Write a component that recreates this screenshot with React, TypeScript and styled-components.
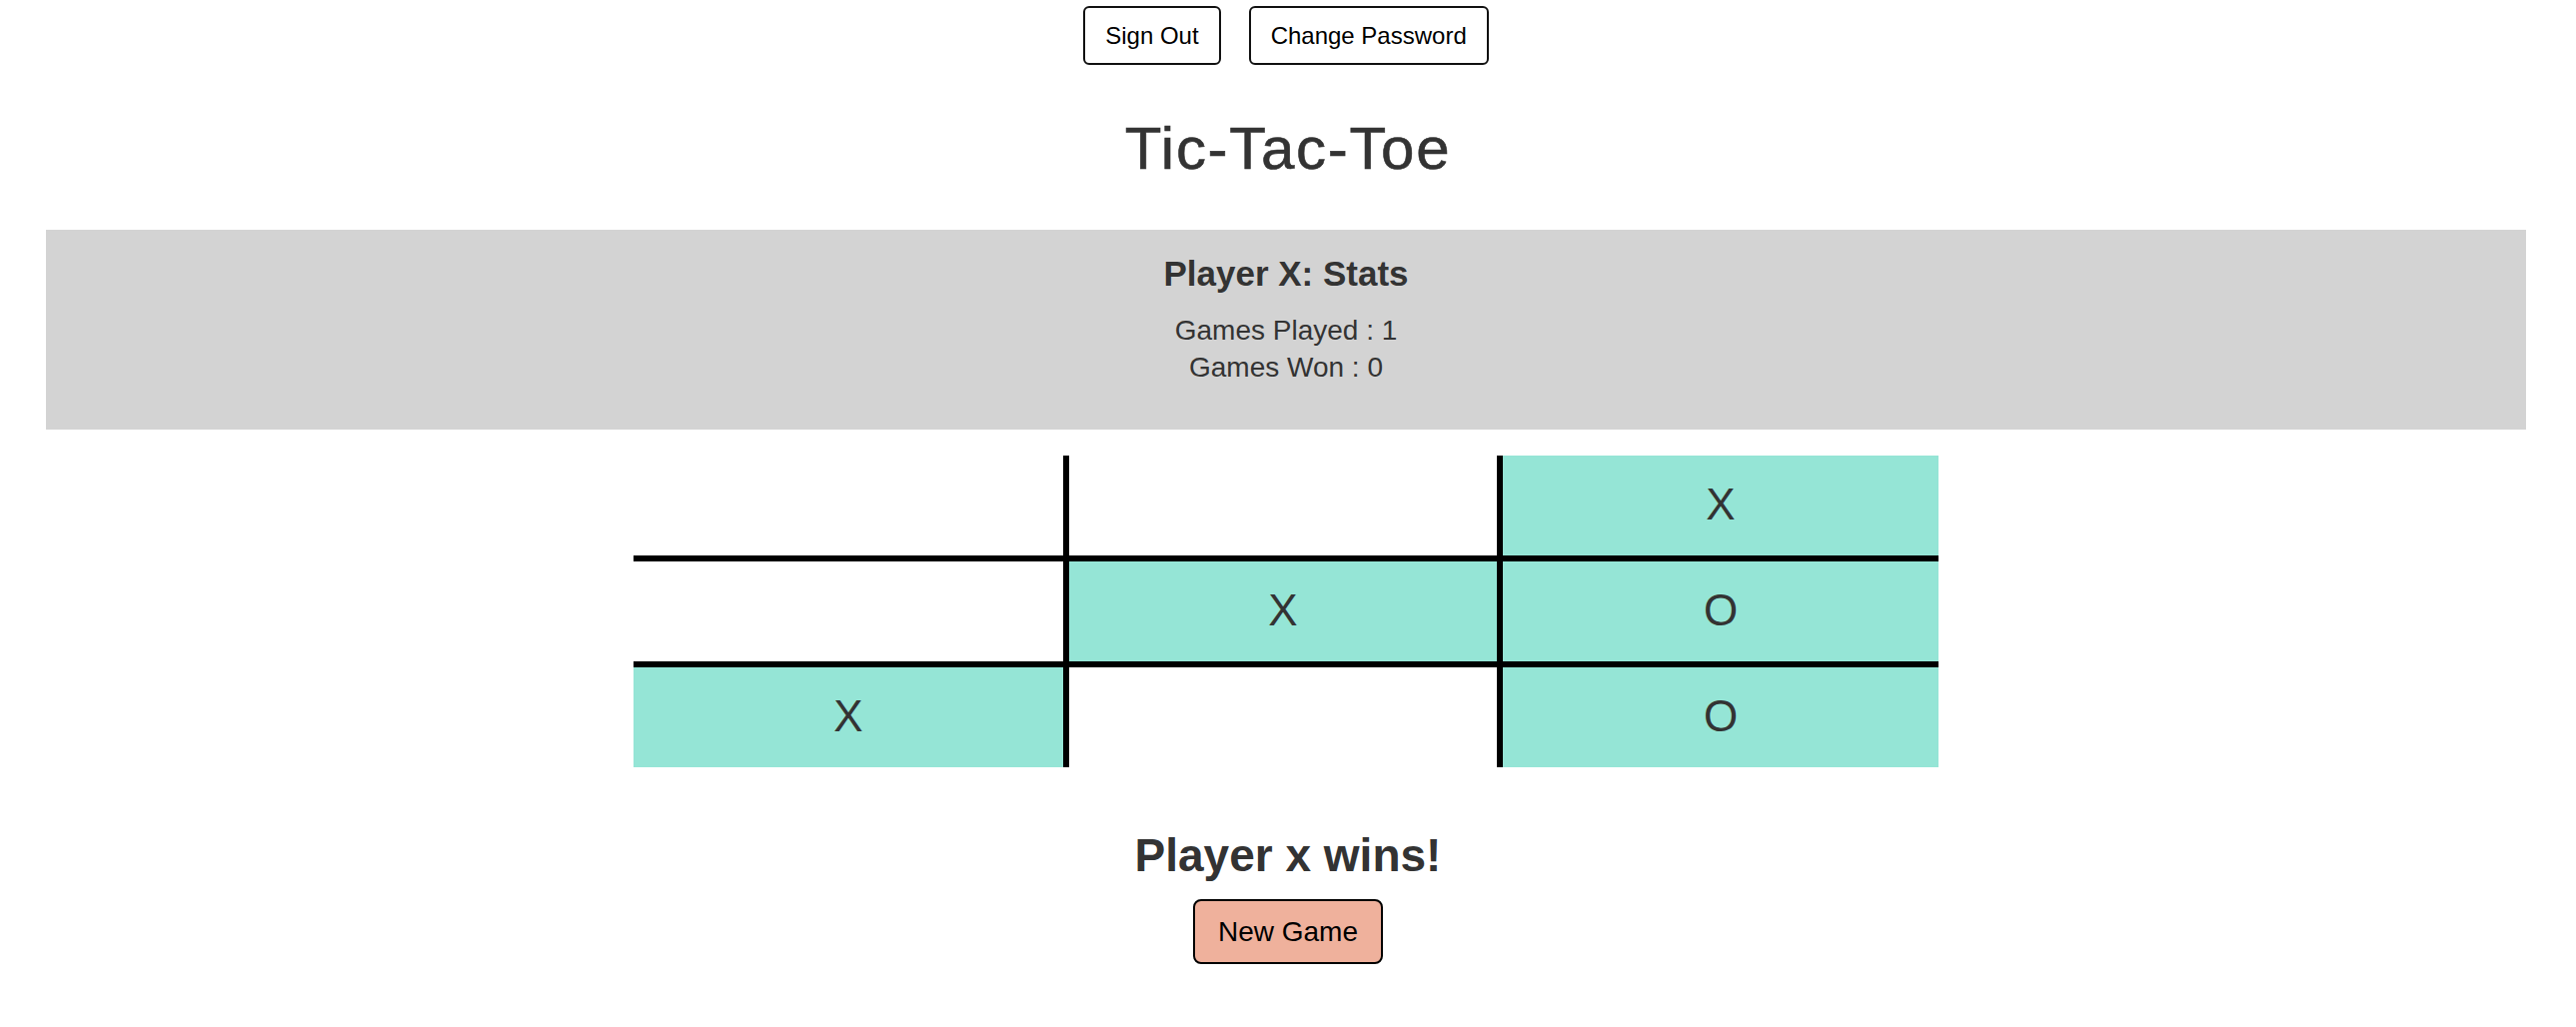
import styled, { createGlobalStyle } from "styled-components";

type Mark = "X" | "O" | "";

const board: Mark[] = ["", "", "X", "", "X", "O", "X", "", "O"];

const GlobalStyle = createGlobalStyle`
  body {
    margin: 0;
    background: #fff;
    font-family: "Liberation Sans", Arial, Helvetica, sans-serif;
    color: #333;
  }
`;

const App = () => {
  return (
    <Page>
      <GlobalStyle />
      <TopBar>
        <AuthButton>Sign Out</AuthButton>
        <AuthButton>Change Password</AuthButton>
      </TopBar>
      <Title>Tic-Tac-Toe</Title>
      <StatsPanel>
        <StatsTitle>Player X: Stats</StatsTitle>
        <StatsLines>
          <StatLine>Games Played : 1</StatLine>
          <StatLine>Games Won : 0</StatLine>
        </StatsLines>
      </StatsPanel>
      <BoardWrap>
        <Board>
          {board.map((mark, i) => (
            <Cell
              key={i}
              $filled={mark !== ""}
              $right={i % 3 !== 2}
              $bottom={i < 6}
            >
              {mark}
            </Cell>
          ))}
        </Board>
      </BoardWrap>
      <Result>Player x wins!</Result>
      <NewGameButton>New Game</NewGameButton>
    </Page>
  );
};
export default App;

const Page = styled.div`
  display: flex;
  flex-direction: column;
  align-items: center;
  width: 100%;
  padding-bottom: 60px;
`;

const TopBar = styled.div`
  display: flex;
  justify-content: center;
  gap: 28px;
  padding-top: 6px;
  padding-right: 4px;
`;

const AuthButton = styled.button`
  height: 59px;
  padding: 0 20px;
  border: 2px solid #111;
  border-radius: 6px;
  background: #fff;
  color: #000;
  font-family: "Liberation Sans", Arial, sans-serif;
  font-size: 24px;
  line-height: 1;
  cursor: pointer;
`;

const Title = styled.h1`
  margin: 54px 0 0;
  font-size: 60px;
  font-weight: 400;
  line-height: 1;
  letter-spacing: 1.7px;
  color: #333;
  -webkit-text-stroke: 0.6px #333;
`;

const StatsPanel = styled.div`
  box-sizing: border-box;
  align-self: stretch;
  height: 200px;
  margin: 51px 50px 0 46px;
  padding-top: 26px;
  background: #d3d3d3;
  display: flex;
  flex-direction: column;
  align-items: center;
`;

const StatsTitle = styled.h3`
  margin: 0;
  font-size: 35px;
  font-weight: 700;
  line-height: 1;
  color: #333;
`;

const StatsLines = styled.div`
  margin-top: 21px;
  display: flex;
  flex-direction: column;
  align-items: center;
`;

const StatLine = styled.div`
  font-size: 28px;
  line-height: 37px;
  color: #333;
`;

const BoardWrap = styled.div`
  align-self: stretch;
  display: flex;
  justify-content: center;
  padding-right: 4px;
  margin-top: 26px;
`;

const Board = styled.div`
  display: grid;
  grid-template-columns: 436px 434px 436px;
  grid-template-rows: 106px 106px 100px;
`;

const Cell = styled.div<{ $filled: boolean; $right: boolean; $bottom: boolean }>`
  display: flex;
  align-items: center;
  justify-content: center;
  background: ${(p) => (p.$filled ? "#95e5d6" : "#fff")};
  border-right: ${(p) => (p.$right ? "6px solid #000" : "none")};
  border-bottom: ${(p) => (p.$bottom ? "6px solid #000" : "none")};
  font-size: 44px;
  line-height: 1;
  color: #333;
  padding-bottom: 3px;
  box-sizing: border-box;
`;

const Result = styled.h2`
  margin: 65px 0 0;
  font-size: 46px;
  font-weight: 700;
  line-height: 1;
  color: #333;
`;

const NewGameButton = styled.button`
  margin-top: 21px;
  height: 65px;
  padding: 0 23px;
  border: 2px solid #000;
  border-radius: 8px;
  background: #efb19c;
  color: #000;
  font-family: "Liberation Sans", Arial, sans-serif;
  font-size: 28px;
  line-height: 1;
  cursor: pointer;
`;
